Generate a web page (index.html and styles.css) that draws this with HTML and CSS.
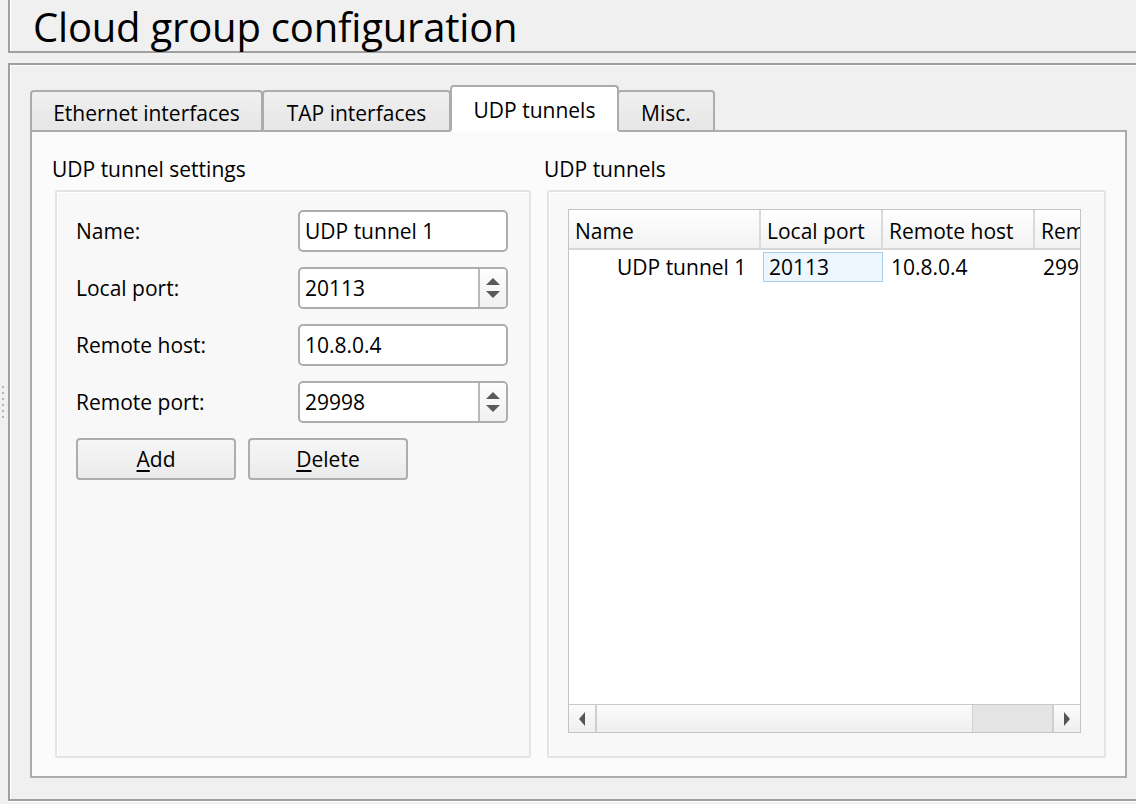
FILE: index.html
```html
<!DOCTYPE html>
<html lang="en">
<head>
<meta charset="utf-8">
<title>Cloud group configuration</title>
<link rel="stylesheet" href="styles.css">
</head>
<body>
<div class="window">
  <header class="title-frame">
    <h1 class="title">Cloud group configuration</h1>
  </header>
  <div class="body-row">
    <div class="splitter">
      <span class="dot"></span><span class="dot"></span><span class="dot"></span>
      <span class="dot"></span><span class="dot"></span><span class="dot"></span>
    </div>
    <section class="main-frame">
      <div class="tab-widget">
        <div class="tab-bar">
          <div class="tab tab-eth">Ethernet interfaces</div>
          <div class="tab tab-tap">TAP interfaces</div>
          <div class="tab tab-udp selected">UDP tunnels</div>
          <div class="tab tab-misc">Misc.</div>
        </div>
        <div class="pane">
          <div class="group">
            <div class="group-title">UDP tunnel settings</div>
            <div class="group-box settings">
              <div class="form-row">
                <span class="label">Name:</span>
                <div class="input"><span class="value">UDP tunnel 1</span></div>
              </div>
              <div class="form-row">
                <span class="label">Local port:</span>
                <div class="input spin"><span class="value">20113</span>
                  <div class="spin-btns"><span class="arrow-up"></span><span class="arrow-down"></span></div>
                </div>
              </div>
              <div class="form-row">
                <span class="label">Remote host:</span>
                <div class="input"><span class="value">10.8.0.4</span></div>
              </div>
              <div class="form-row">
                <span class="label">Remote port:</span>
                <div class="input spin"><span class="value">29998</span>
                  <div class="spin-btns"><span class="arrow-up"></span><span class="arrow-down"></span></div>
                </div>
              </div>
              <div class="button-row">
                <button class="btn"><u>A</u>dd</button>
                <button class="btn"><u>D</u>elete</button>
              </div>
            </div>
          </div>
          <div class="group">
            <div class="group-title">UDP tunnels</div>
            <div class="group-box tunnels">
              <div class="table">
                <div class="table-grid">
                  <div class="th">Name</div>
                  <div class="th">Local port</div>
                  <div class="th">Remote host</div>
                  <div class="th last">Rem</div>
                  <div class="td name">UDP tunnel 1</div>
                  <div class="td"><span class="cell-sel">20113</span></div>
                  <div class="td">10.8.0.4</div>
                  <div class="td">299</div>
                </div>
                <div class="table-body"></div>
                <div class="hscroll">
                  <div class="sb-btn"><span class="arrow-left"></span></div>
                  <div class="sb-track"><div class="sb-handle"></div></div>
                  <div class="sb-btn right"><span class="arrow-right"></span></div>
                </div>
              </div>
            </div>
          </div>
        </div>
      </div>
    </section>
  </div>
</div>
</body>
</html>
```

FILE: styles.css
```css
* { box-sizing: border-box; }

html, body {
  margin: 0;
  padding: 0;
  background: #f0f0f0;
}

body {
  font-family: "Open Sans", "Noto Sans", "Liberation Sans", sans-serif;
  font-size: 21px;
  color: #000;
  width: 1136px;
  height: 804px;
  overflow: hidden;
}

.window {
  display: flex;
  flex-direction: column;
  height: 804px;
}

/* ---------- title ---------- */
.title-frame {
  margin-left: 8px;
  height: 53px;
  border-left: 2px solid #a0a0a0;
  border-bottom: 2px solid #a0a0a0;
  box-shadow: inset 1px 0 0 #ffffff;
  display: flex;
  align-items: center;
}

.title {
  margin: 0;
  padding-left: 23px;
  padding-top: 2px;
  font-size: 40px;
  font-weight: 400;
  line-height: 51px;
  letter-spacing: -0.2px;
}

/* ---------- body ---------- */
.body-row {
  display: flex;
  margin-top: 10px;
}

.splitter {
  width: 8px;
  padding-top: 323px;
  display: flex;
  flex-direction: column;
  align-items: center;
  gap: 4px;
}

.dot {
  width: 2px;
  height: 2px;
  background: #b4b4b4;
  margin-left: -2px;
}

.main-frame {
  flex: 1;
  height: 738px;
  border-top: 2px solid #a0a0a0;
  border-left: 2px solid #a0a0a0;
  border-bottom: 2px solid #a0a0a0;
  box-shadow: inset 1px 1px 0 #ffffff, 0 1px 0 #ffffff;
  padding: 20px 9px 21px 20px;
  display: flex;
}

.tab-widget {
  flex: 1;
  display: flex;
  flex-direction: column;
}

/* ---------- tabs ---------- */
.tab-bar {
  display: flex;
  align-items: flex-end;
  height: 47px;
  position: relative;
  z-index: 1;
  margin-bottom: -2px;
}

.tab {
  height: 42px;
  border: 2px solid #acacac;
  border-radius: 4px 4px 0 0;
  background: linear-gradient(#f0f0f0, #e6e6e6);
  display: flex;
  align-items: center;
  justify-content: center;
  padding-top: 4px;
  margin-right: -1px;
  white-space: nowrap;
}

.tab-eth { width: 233px; }
.tab-tap { width: 189px; }
.tab-udp { width: 169px; }
.tab-misc { width: 98px; }

.tab.selected {
  height: 47px;
  background: #ffffff;
  border-bottom-color: #ffffff;
  padding-top: 3px;
  margin-right: -2px;
  position: relative;
  z-index: 2;
}

.pane {
  flex: 1;
  border: 2px solid #acacac;
  background: #fbfbfb;
  padding: 23px 19px 18px 23px;
  display: grid;
  grid-template-columns: 476px 559px;
  column-gap: 16px;
}

/* ---------- groups ---------- */
.group {
  display: flex;
  flex-direction: column;
}

.group-title {
  height: 28px;
  line-height: 28px;
  margin-left: -3px;
  margin-bottom: 7px;
}

.group-box {
  flex: 1;
  border: 2px solid #e4e4e4;
  border-radius: 2px;
  background: #f8f8f8;
  box-shadow: inset 1px 1px 0 #ffffff;
}

.settings {
  padding: 18px 21px 0 19px;
  display: flex;
  flex-direction: column;
  gap: 15px;
}

.form-row {
  display: flex;
  align-items: center;
  height: 42px;
}

.label {
  width: 222px;
}

.input {
  width: 210px;
  height: 42px;
  border: 2px solid #adadad;
  border-radius: 5px;
  background: #ffffff;
  display: flex;
  align-items: center;
  padding-left: 5px;
}

.input .value {
  flex: 1;
}

.spin-btns {
  width: 28px;
  height: 100%;
  border-left: 2px solid #b8b8b8;
  background: linear-gradient(#fdfdfd, #f1f1f1);
  border-radius: 0 3px 3px 0;
  display: flex;
  flex-direction: column;
  align-items: center;
  justify-content: center;
  gap: 6px;
}

.arrow-up {
  width: 0;
  height: 0;
  border-left: 7px solid transparent;
  border-right: 7px solid transparent;
  border-bottom: 7px solid #5a5a5a;
}

.arrow-down {
  width: 0;
  height: 0;
  border-left: 7px solid transparent;
  border-right: 7px solid transparent;
  border-top: 7px solid #5a5a5a;
}

.button-row {
  display: flex;
  gap: 12px;
}

.btn {
  width: 160px;
  height: 42px;
  border: 2px solid #adadad;
  border-radius: 4px;
  background: linear-gradient(#f6f6f6, #ebebeb);
  font-family: inherit;
  font-size: 21px;
  color: #000;
  padding: 0;
}

.btn u {
  text-underline-offset: 3px;
}

/* ---------- table ---------- */
.tunnels {
  padding: 17px 23px 23px 19px;
  display: flex;
}

.table {
  flex: 1;
  border: 1px solid #c4c4c4;
  background: #ffffff;
  display: flex;
  flex-direction: column;
  overflow: hidden;
}

.table-grid {
  display: grid;
  grid-template-columns: 192px 122px 152px 80px;
  grid-template-rows: 40px 34px;
  width: 546px;
}

.th {
  background: linear-gradient(#ffffff, #f2f2f2);
  border-right: 2px solid #dadada;
  border-bottom: 2px solid #d6d6d6;
  padding-left: 6px;
  display: flex;
  align-items: center;
  padding-top: 4px;
  white-space: nowrap;
  overflow: hidden;
}

.td {
  display: flex;
  align-items: center;
  padding-left: 8px;
  white-space: nowrap;
}

.td.name {
  padding-left: 48px;
}

.td:nth-child(6) {
  padding-left: 2px;
}

.cell-sel {
  width: 120px;
  height: 30px;
  background: #eef6fe;
  border: 1px solid #a6cdee;
  display: flex;
  align-items: center;
  padding-left: 5px;
}

.table-body {
  flex: 1;
}

.hscroll {
  height: 28px;
  border-top: 1px solid #cacaca;
  display: flex;
  background: linear-gradient(#fbfbfb, #efefef);
}

.sb-btn {
  width: 28px;
  display: flex;
  align-items: center;
  justify-content: center;
  border-right: 2px solid #cfcfcf;
}

.sb-btn.right {
  border-right: none;
  border-left: 2px solid #cfcfcf;
}

.sb-track {
  flex: 1;
  display: flex;
  justify-content: flex-end;
}

.sb-handle {
  width: 80px;
  background: #e4e4e4;
  border-left: 1px solid #cfcfcf;
}

.arrow-left {
  width: 0;
  height: 0;
  border-top: 7px solid transparent;
  border-bottom: 7px solid transparent;
  border-right: 6px solid #555555;
}

.arrow-right {
  width: 0;
  height: 0;
  border-top: 7px solid transparent;
  border-bottom: 7px solid transparent;
  border-left: 6px solid #555555;
}
```
